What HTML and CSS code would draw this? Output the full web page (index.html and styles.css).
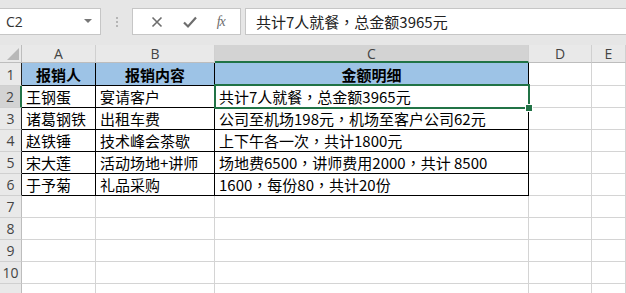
FILE: index.html
```html
<!DOCTYPE html>
<html>
<head>
<meta charset="utf-8">
<link rel="stylesheet" href="styles.css">
</head>
<body>
<div class="app">
  <div class="toolbar">
    <div class="namebox"><span>C2</span><svg class="dd" width="8" height="5" viewBox="0 0 8 5"><path d="M0 0h8L4 4z" fill="#777"/></svg></div>
    <div class="sep"><i></i><i></i><i></i></div>
    <div class="fbtns">
      <svg width="14" height="14" viewBox="0 0 14 14"><path d="M2.5 2.5l9 9M11.5 2.5l-9 9" stroke="#6d6d6d" stroke-width="1.6"/></svg>
      <svg width="16" height="14" viewBox="0 0 16 14"><path d="M2 7.5l4 4 8-9" stroke="#6d6d6d" stroke-width="2.2" fill="none"/></svg>
      <span class="fx">fx</span>
    </div>
    <div class="finput">共计7人就餐<span class="p">，</span>总金额3965元</div>
  </div>
  <div class="sheet">
    <div class="ch corner"><svg width="12" height="12" viewBox="0 0 12 12"><path d="M12 0V12H0z" fill="#b8b8b8"/></svg></div>
    <div class="ch">A</div><div class="ch">B</div><div class="ch sel">C</div><div class="ch">D</div><div class="ch">E</div>

    <div class="rh tb">1</div>
    <div class="c t hd">报销人</div><div class="c t hd">报销内容</div><div class="c t hd">金额明细</div><div class="c"></div><div class="c"></div>

    <div class="rh tb rsel">2</div>
    <div class="c t">王钢蛋</div><div class="c t">宴请客户</div><div class="c t">共计7人就餐<span class="p">，</span>总金额3965元</div><div class="c"></div><div class="c"></div>

    <div class="rh tb">3</div>
    <div class="c t">诸葛钢铁</div><div class="c t">出租车费</div><div class="c t">公司至机场198元<span class="p">，</span>机场至客户公司62元</div><div class="c"></div><div class="c"></div>

    <div class="rh tb">4</div>
    <div class="c t">赵铁锤</div><div class="c t">技术峰会茶歇</div><div class="c t">上下午各一次<span class="p">，</span>共计1800元</div><div class="c"></div><div class="c"></div>

    <div class="rh tb">5</div>
    <div class="c t">宋大莲</div><div class="c t">活动场地+讲师</div><div class="c t">场地费6500<span class="p">，</span>讲师费用2000<span class="p">，</span>共计 8500</div><div class="c"></div><div class="c"></div>

    <div class="rh tb">6</div>
    <div class="c t">于予菊</div><div class="c t">礼品采购</div><div class="c t">1600<span class="p">，</span>每份80<span class="p">，</span>共计20份</div><div class="c"></div><div class="c"></div>

    <div class="rh">7</div><div class="c"></div><div class="c"></div><div class="c"></div><div class="c"></div><div class="c"></div>
    <div class="rh">8</div><div class="c"></div><div class="c"></div><div class="c"></div><div class="c"></div><div class="c"></div>
    <div class="rh">9</div><div class="c"></div><div class="c"></div><div class="c"></div><div class="c"></div><div class="c"></div>
    <div class="rh">10</div><div class="c"></div><div class="c"></div><div class="c"></div><div class="c"></div><div class="c"></div>
    <div class="rh"></div><div class="c"></div><div class="c"></div><div class="c"></div><div class="c"></div><div class="c"></div>

    <div class="selbox"><span class="handle"></span></div>
  </div>
</div>
</body>
</html>
```
FILE: styles.css
```css
* { box-sizing: border-box; }
html, body { margin: 0; padding: 0; }
body {
  width: 626px; height: 293px; overflow: hidden;
  background: #fff;
  font-family: "Noto Sans CJK SC", "Noto Sans", sans-serif;
  color: #000;
}
.app { width: 626px; }
.p { font-family: "Noto Sans CJK TC", "Noto Sans CJK SC", sans-serif; }
.toolbar {
  height: 45px;
  background: #e6e6e6;
  display: flex;
  align-items: flex-start;
  padding-top: 8px;
}
.namebox {
  width: 101px; height: 27px;
  background: #fff;
  border: 1px solid #c6c6c6;
  border-left: none;
  display: flex; align-items: center; justify-content: space-between;
  padding: 0 8px 0 6px;
  font-family: "Open Sans", "Liberation Sans", sans-serif;
  font-size: 14px; color: #333;
}
.sep {
  width: 31px; height: 27px;
  display: flex; flex-direction: column; align-items: center; justify-content: center; gap: 2px;
}
.sep i { display: block; width: 2px; height: 2px; background: #b5b5b5; }
.fbtns {
  width: 109px; height: 27px;
  background: #fff;
  border: 1px solid #c6c6c6;
  display: flex; align-items: center; justify-content: space-around;
  padding: 0 6px 0 8px;
}
.fx {
  font-family: "Liberation Serif", serif;
  font-style: italic; font-size: 14px; color: #6d6d6d;
  letter-spacing: -1px;
}
.finput {
  margin-left: 4px;
  flex: 1; height: 27px;
  background: #fff;
  border: 1px solid #c6c6c6;
  border-right: none;
  padding-left: 10px;
  font-size: 15px; line-height: 25px; color: #222;
  white-space: nowrap;
}
.sheet {
  position: relative;
  display: grid;
  grid-template-columns: 22px 74px 119px 314px 63px 34px;
  grid-template-rows: 18px 23px repeat(10, 22px);
}
.ch {
  background: #e9e9e9;
  border-right: 1px solid #d0d0d0;
  border-bottom: 1px solid #bdbdbd;
  font-family: "Open Sans", "Liberation Sans", sans-serif;
  font-size: 14px; color: #444;
  display: flex; align-items: center; justify-content: center;
  line-height: 17px;
}
.ch.corner { justify-content: flex-end; align-items: flex-end; padding: 0 2px 2px 0; border-right-color: #bdbdbd; }
.ch.sel { background: #d3d3d3; border-bottom: 2px solid #217346; }
.rh {
  background: #e9e9e9;
  border-right: 1px solid #bdbdbd;
  border-bottom: 1px solid #d0d0d0;
  font-family: "Open Sans", "Liberation Sans", sans-serif;
  font-size: 14px; color: #444;
  display: flex; align-items: flex-end; justify-content: center;
  line-height: 20px;
}
.rh.tb { border-right-color: #222; }
.rh.rsel { background: #d3d3d3; border-right: 2px solid #217346; }
.c {
  border-right: 1px solid #d4d4d4;
  border-bottom: 1px solid #d4d4d4;
  font-size: 15px;
  line-height: 21px;
  white-space: nowrap;
  overflow: hidden;
  padding-left: 4px;
  display: flex; align-items: center;
}
.c.t { border-right-color: #000; border-bottom-color: #000; }
.c.hd { background: #9dc3e6; font-weight: bold; justify-content: center; padding-left: 0; }
.selbox {
  position: absolute;
  left: 214px; top: 39px;
  width: 316px; height: 25px;
  border: 2px solid #217346;
  pointer-events: none;
}
.handle {
  position: absolute;
  right: -4px; bottom: -4px;
  width: 6px; height: 6px;
  background: #217346;
  border: 1px solid #fff;
  box-sizing: content-box;
  margin: -1px;
}
```
